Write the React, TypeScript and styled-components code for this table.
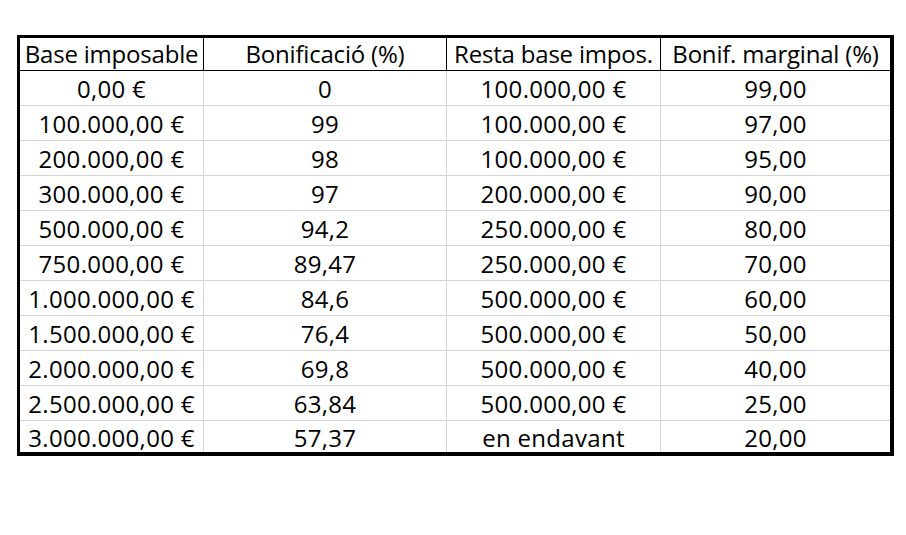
import React from "react";
import styled, { createGlobalStyle } from "styled-components";

const GlobalStyle = createGlobalStyle`
  html, body {
    margin: 0;
    padding: 0;
    background: #ffffff;
  }
  body {
    font-family: "Open Sans", "Liberation Sans", sans-serif;
    color: #000000;
  }
`;

const Page = styled.div`
  width: 906px;
  height: 535px;
  padding: 35px 0 0 17px;
  box-sizing: border-box;
  background: #ffffff;
`;

// quadre exterior amb vora gruixuda
const Frame = styled.div`
  width: 877px;
  box-sizing: border-box;
  border-style: solid;
  border-color: #000000;
  border-width: 3px 4px 4px 3px;
  display: grid;
  grid-template-columns: 184px 243px 214px 1fr;
`;

const Cell = styled.div<{ $head?: boolean; $lastCol?: boolean; $lastRow?: boolean }>`
  box-sizing: border-box;
  height: ${(p) => (p.$head ? 33 : p.$lastRow ? 31 : 35)}px;
  padding-top: ${(p) => (p.$head ? 1 : p.$lastRow ? 2 : 3)}px;
  line-height: ${(p) => (p.$lastRow ? 29 : 30)}px;
  font-size: 24px;
  letter-spacing: ${(p) => (p.$head ? "-0.2px" : "0.3px")};
  text-align: center;
  white-space: nowrap;
  border-right: ${(p) => (p.$lastCol ? "none" : `1px solid ${p.$head ? "#000000" : "#d4d4d4"}`)};
  border-bottom: ${(p) => (p.$lastRow ? "none" : `1px solid ${p.$head ? "#000000" : "#d4d4d4"}`)};
`;

const headers = [
  "Base imposable",
  "Bonificació (%)",
  "Resta base impos.",
  "Bonif. marginal (%)",
];

const rows = [
  ["0,00 €", "0", "100.000,00 €", "99,00"],
  ["100.000,00 €", "99", "100.000,00 €", "97,00"],
  ["200.000,00 €", "98", "100.000,00 €", "95,00"],
  ["300.000,00 €", "97", "200.000,00 €", "90,00"],
  ["500.000,00 €", "94,2", "250.000,00 €", "80,00"],
  ["750.000,00 €", "89,47", "250.000,00 €", "70,00"],
  ["1.000.000,00 €", "84,6", "500.000,00 €", "60,00"],
  ["1.500.000,00 €", "76,4", "500.000,00 €", "50,00"],
  ["2.000.000,00 €", "69,8", "500.000,00 €", "40,00"],
  ["2.500.000,00 €", "63,84", "500.000,00 €", "25,00"],
  ["3.000.000,00 €", "57,37", "en endavant", "20,00"],
];

const App = () => {
  return (
    <>
      <GlobalStyle />
      <Page>
        <Frame>
          {headers.map((h, i) => (
            <Cell key={h} $head $lastCol={i === headers.length - 1}>
              {h}
            </Cell>
          ))}
          {rows.map((row, r) =>
            row.map((v, c) => (
              <Cell
                key={`${r}-${c}`}
                $lastCol={c === row.length - 1}
                $lastRow={r === rows.length - 1}
              >
                {v}
              </Cell>
            ))
          )}
        </Frame>
      </Page>
    </>
  );
};

export default App;
